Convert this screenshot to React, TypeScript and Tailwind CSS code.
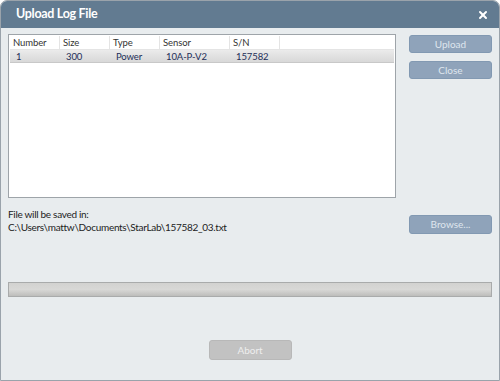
import { X } from 'lucide-react';

const font = { fontFamily: 'Lato, "Open Sans", sans-serif' };

export default function App() {
  const cols = [
    { name: 'Number', w: 'w-[50px]' },
    { name: 'Size', w: 'w-[50px]' },
    { name: 'Type', w: 'w-[50px]' },
    { name: 'Sensor', w: 'w-[70px]' },
    { name: 'S/N', w: 'w-[50px]' },
  ];
  const row = ['1', '300', 'Power', '10A-P-V2', '157582'];

  return (
    <div className="w-[500px] h-[381px] bg-white" style={font}>
      <div className="w-[500px] h-[381px] flex flex-col rounded-t-[7px] overflow-hidden border border-[#9aa3ab] bg-[#e8ecee]">
        <div className="h-[27px] shrink-0 bg-[#627b91] flex items-center justify-between pl-[15px] pr-[10px]">
          <span className="text-white font-bold text-[12.5px] tracking-[-0.3px]">Upload Log File</span>
          <X className="w-[12px] h-[12px] text-white" strokeWidth={4} />
        </div>
        <div className="flex-1 flex flex-col px-[7px] pt-[6px]">
          <div className="flex gap-[13px]">
            <div className="w-[388px] h-[164px] bg-white border border-[#9ea4a9] pt-[1px] px-[1px]">
              <div className="flex h-[14px] border-b border-[#e4e4e4]">
                {cols.map((c) => (
                  <div key={c.name} className={`${c.w} border-r border-[#e4e4e4] pl-[3px] text-[9.5px] tracking-[-0.1px] leading-[14px] text-[#333]`}>
                    {c.name}
                  </div>
                ))}
              </div>
              <div className="flex h-[13px] bg-gradient-to-b from-[#ebebeb] to-[#d8d8d8] border-b border-[#c8c8c8]">
                {row.map((v, i) => (
                  <div key={i} className={`${cols[i].w} pl-[6px] text-[9.5px] tracking-[-0.1px] leading-[13px] text-[#1e2e58]`}>
                    {v}
                  </div>
                ))}
              </div>
            </div>
            <div className="flex flex-col gap-[8px] pt-[1px]">
              <button className="w-[83px] h-[18px] rounded-[3px] bg-[#8fa3ba] border border-[#8299b2] text-[10px] text-[#dfe6ee]">Upload</button>
              <button className="w-[83px] h-[18px] rounded-[3px] bg-[#8fa3ba] border border-[#8299b2] text-[10px] text-[#dfe6ee]">Close</button>
            </div>
          </div>
          <div className="flex justify-between mt-[9px]">
            <div className="text-[10px] tracking-[-0.3px] leading-[13px] text-[#222] pt-[1px]">
              <div>File will be saved in:</div>
              <div>C:\Users\mattw\Documents\StarLab\157582_03.txt</div>
            </div>
            <button className="w-[83px] h-[19px] mt-[8px] rounded-[3px] bg-[#8fa3ba] border border-[#8299b2] text-[10px] text-[#dfe6ee]">Browse...</button>
          </div>
          <div className="mt-[48px] h-[15px] w-[484px] border border-[#a9abab] bg-gradient-to-b from-[#d2d2d0] via-[#d8d8d6] to-[#bdbdbb]" />
          <div className="flex justify-center mt-[43px]">
            <button className="w-[83px] h-[20px] rounded-[3px] bg-[#c2c2c2] border border-[#b8b8b8] text-[10px] text-[#eeeeee]">Abort</button>
          </div>
        </div>
      </div>
    </div>
  );
}
